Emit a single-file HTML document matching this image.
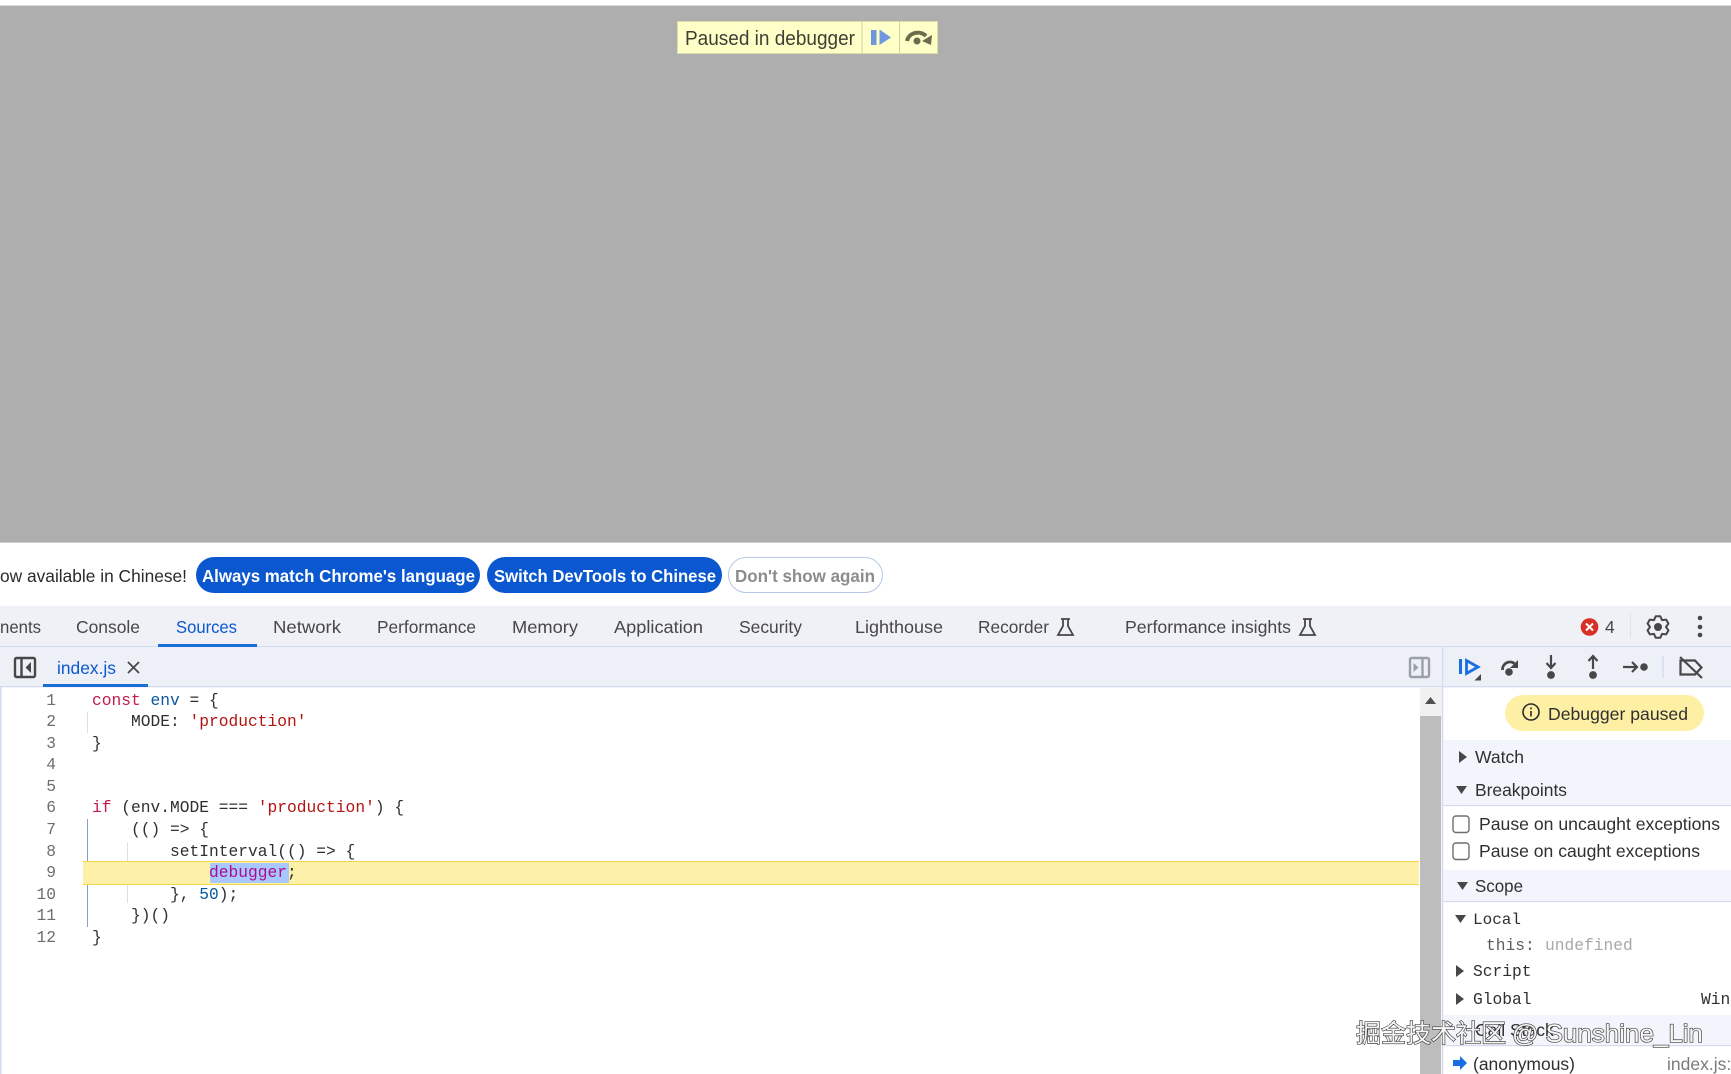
<!DOCTYPE html>
<html>
<head>
<meta charset="utf-8">
<title>Paused in debugger</title>
<style>
html,body{margin:0;padding:0;background:#fff;width:1731px;height:1074px;overflow:hidden}
svg{display:block;filter:blur(.3px)}
text{font-family:"Liberation Sans",sans-serif;white-space:pre}
.t{font-size:17.5px;fill:#474747}
.m{font-family:"Liberation Mono","DejaVu Sans Mono",monospace;font-size:16.25px;fill:#303030}
.n{font-family:"Liberation Mono","DejaVu Sans Mono",monospace;font-size:16.25px;fill:#6e6e6e;text-anchor:end}
.k{fill:#c41a4a}.s{fill:#b31412}.b{fill:#0b57a0}.p{fill:#aa0d91}
.wm{font-family:"Liberation Sans","Noto Sans CJK SC",sans-serif;font-size:25px;fill:#f6f6f6;stroke:#3c3c3c;stroke-width:1.3px;paint-order:stroke}
</style>
</head>
<body>
<svg width="1731" height="1074" viewBox="0 0 1731 1074" xmlns="http://www.w3.org/2000/svg">
<rect width="1731" height="1074" fill="#fff"/>
<!-- page overlay -->
<rect y="5" width="1731" height="1.5" fill="#d8d8d8"/>
<rect y="6" width="1731" height="536" fill="#aeaeae"/>
<!-- paused banner -->
<rect x="677.5" y="21.5" width="260" height="32" fill="#ffffc8" stroke="#dcdca8"/>
<line x1="862" y1="22" x2="862" y2="53" stroke="#cfcfa8"/>
<line x1="899.5" y1="22" x2="899.5" y2="53" stroke="#cfcfa8"/>
<text x="685" y="45" font-size="20" fill="#3f3f35" textLength="170" lengthAdjust="spacingAndGlyphs">Paused in debugger</text>
<rect x="871" y="30" width="5.500" height="15" fill="#6f97de"/>
<path d="M879.500 29.500 L891 37.500 L879.500 45Z" fill="#6f97de"/>
<path d="M907 41 A11 10 0 0 1 926 36" fill="none" stroke="#6b6b4e" stroke-width="4"/>
<path d="M932 35 L931 45 L922 41Z" fill="#6b6b4e"/>
<circle cx="917" cy="41" r="3.5" fill="#6b6b4e"/>

<!-- infobar -->
<rect y="542" width="1731" height="64" fill="#fff"/>
<rect y="542" width="1731" height="1" fill="#d0d0d8"/>
<text x="0" y="582" font-size="17.5" fill="#2a2a2a" textLength="187" lengthAdjust="spacingAndGlyphs">ow available in Chinese!</text>
<rect x="196" y="557" width="284" height="36" rx="18" fill="#0b57d0"/>
<text x="202" y="582" font-size="17.5" font-weight="700" fill="#fff" textLength="273" lengthAdjust="spacingAndGlyphs">Always match Chrome's language</text>
<rect x="487" y="557" width="235" height="36" rx="18" fill="#0b57d0"/>
<text x="494" y="582" font-size="17.5" font-weight="700" fill="#fff" textLength="222" lengthAdjust="spacingAndGlyphs">Switch DevTools to Chinese</text>
<rect x="728.5" y="557.5" width="154" height="35" rx="17.5" fill="#fff" stroke="#b5c7e6"/>
<text x="735" y="582" font-size="17.5" font-weight="700" fill="#8c8c8c" textLength="140" lengthAdjust="spacingAndGlyphs">Don't show again</text>

<!-- main tab bar -->
<rect y="606" width="1731" height="41" fill="#eff1f7"/>
<rect y="646" width="1731" height="1.3" fill="#d3dcf0"/>
<text class="t" x="0" y="633" textLength="41" lengthAdjust="spacingAndGlyphs">nents</text>
<text class="t" x="76" y="633" textLength="64" lengthAdjust="spacingAndGlyphs">Console</text>
<text class="t" x="176" y="633" style="fill:#0b57d0" textLength="61" lengthAdjust="spacingAndGlyphs">Sources</text>
<rect x="158" y="644" width="99" height="3" fill="#1a6fd6"/>
<text class="t" x="273" y="633" textLength="68" lengthAdjust="spacingAndGlyphs">Network</text>
<text class="t" x="377" y="633" textLength="99" lengthAdjust="spacingAndGlyphs">Performance</text>
<text class="t" x="512" y="633" textLength="66" lengthAdjust="spacingAndGlyphs">Memory</text>
<text class="t" x="614" y="633" textLength="89" lengthAdjust="spacingAndGlyphs">Application</text>
<text class="t" x="739" y="633" textLength="63" lengthAdjust="spacingAndGlyphs">Security</text>
<text class="t" x="855" y="633" textLength="88" lengthAdjust="spacingAndGlyphs">Lighthouse</text>
<text class="t" x="978" y="633" textLength="71" lengthAdjust="spacingAndGlyphs">Recorder</text>
<path d="M1061 619 H1070 M1063 619 V626 L1058 635 H1073 L1068 626 V619" fill="none" stroke="#474747" stroke-width="1.8"/>
<text class="t" x="1125" y="633" textLength="166" lengthAdjust="spacingAndGlyphs">Performance insights</text>
<path d="M1303 619 H1312 M1305 619 V626 L1300 635 H1315 L1310 626 V619" fill="none" stroke="#474747" stroke-width="1.8"/>
<circle cx="1589.5" cy="627" r="8.8" fill="#d93025"/>
<path d="M1586 623.5 L1593 630.5 M1593 623.5 L1586 630.5" stroke="#fff" stroke-width="2"/>
<text class="t" x="1605" y="633">4</text>
<line x1="1630.5" y1="614" x2="1630.5" y2="638" stroke="#dfe3ee"/>
<circle cx="1658" cy="627" r="4" fill="#474747"/>
<path transform="translate(1658 627)" d="M2.290 -10.760 L-2.290 -10.760 L-4 -6.930 L-8.170 -7.360 L-10.460 -3.400 L-8 0 L-10.460 3.400 L-8.170 7.360 L-4 6.930 L-2.290 10.760 L2.290 10.760 L4 6.930 L8.170 7.360 L10.460 3.400 L8 0 L10.460 -3.400 L8.170 -7.360 L4 -6.930Z" fill="none" stroke="#474747" stroke-width="2" stroke-linejoin="round"/>
<circle cx="1700" cy="618" r="2.300" fill="#474747"/><circle cx="1700" cy="627" r="2.300" fill="#474747"/><circle cx="1700" cy="635" r="2.300" fill="#474747"/>

<!-- sources toolbar -->
<rect y="647" width="1731" height="40" fill="#eef0f8"/>
<rect y="686" width="1731" height="1.3" fill="#d3dcf0"/>
<rect x="15" y="658" width="20" height="19" rx="1.500" fill="none" stroke="#474747" stroke-width="2.400"/>
<line x1="21.500" y1="658" x2="21.500" y2="677" stroke="#474747" stroke-width="2.400"/>
<path d="M31 662 V673 L25.500 667.500Z" fill="#474747"/>
<text x="57" y="674" font-size="17.500" fill="#0b57d0" textLength="59" lengthAdjust="spacingAndGlyphs">index.js</text>
<path d="M128 662 L139 673 M139 662 L128 673" stroke="#474747" stroke-width="1.8"/>
<rect x="43" y="684" width="105" height="3" fill="#1a6fd6"/>
<rect x="1410" y="658" width="19" height="19" rx="1.500" fill="none" stroke="#9aa0a6" stroke-width="2.400"/>
<line x1="1422.500" y1="658" x2="1422.500" y2="677" stroke="#9aa0a6" stroke-width="2.400"/>
<path d="M1413.500 663 V672 L1418.500 667.500Z" fill="#9aa0a6"/>

<!-- code area -->
<rect x="0" y="687" width="1.500" height="387" fill="#d3dcf0"/>
<rect x="1420" y="687" width="22" height="387" fill="#f1f1f1"/>
<rect x="1420" y="716" width="21" height="358" fill="#bdbdbd"/>
<path d="M1430.500 697 L1436 704 H1425Z" fill="#505050"/>
<rect x="1442" y="647" width="1.300" height="427" fill="#d3dcf0"/>

<line x1="87.500" y1="712" x2="87.500" y2="733" stroke="#dcdfe6"/>
<line x1="87.500" y1="819" x2="87.500" y2="927" stroke="#8aa0c4"/>
<line x1="127.500" y1="842" x2="127.500" y2="903" stroke="#dcdfe6"/>
<rect x="83" y="861.500" width="1336" height="23" fill="#fdf1a9"/>
<line x1="83" y1="861.500" x2="1419" y2="861.500" stroke="#f3d648"/>
<line x1="83" y1="884.500" x2="1419" y2="884.500" stroke="#f3d648"/>
<rect x="210" y="863" width="79" height="20" fill="#a8c7fa"/>

<text class="n" x="56" y="705">1</text>
<text class="n" x="56" y="726">2</text>
<text class="n" x="56" y="748">3</text>
<text class="n" x="56" y="769">4</text>
<text class="n" x="56" y="791">5</text>
<text class="n" x="56" y="812">6</text>
<text class="n" x="56" y="834">7</text>
<text class="n" x="56" y="856">8</text>
<text class="n" x="56" y="877">9</text>
<text class="n" x="56" y="899">10</text>
<text class="n" x="56" y="920">11</text>
<text class="n" x="56" y="942">12</text>

<text class="m" x="92" y="705"><tspan class="k">const</tspan> <tspan class="b">env</tspan> = {</text>
<text class="m" x="92" y="726">    MODE: <tspan class="s">'production'</tspan></text>
<text class="m" x="92" y="748">}</text>
<text class="m" x="92" y="812"><tspan class="k">if</tspan> (env.MODE === <tspan class="s">'production'</tspan>) {</text>
<text class="m" x="92" y="834">    (() =&gt; {</text>
<text class="m" x="92" y="856">        setInterval(() =&gt; {</text>
<text class="m" x="92" y="877">            <tspan class="p">debugger</tspan>;</text>
<text class="m" x="92" y="899">        }, <tspan class="b">50</tspan>);</text>
<text class="m" x="92" y="920">    })()</text>
<text class="m" x="92" y="942">}</text>

<!-- debugger toolbar icons -->
<rect x="1459" y="659" width="3" height="15" fill="#1a6fe0"/>
<path d="M1466.500 660.500 L1478 667 L1466.500 673.500Z" fill="none" stroke="#1a6fe0" stroke-width="2.800"/>
<path d="M1481 674 V680.500 H1474.500Z" fill="#474747"/>
<path d="M1502.500 670 A7.500 7.500 0 0 1 1514.500 663.500" fill="none" stroke="#474747" stroke-width="2.800"/>
<path d="M1518 660 V668 H1510Z" fill="#474747"/>
<circle cx="1509" cy="672" r="3.800" fill="#474747"/>
<path d="M1551 655 V668 M1546.500 663 L1551 668 L1555.500 663" fill="none" stroke="#474747" stroke-width="2.200"/>
<circle cx="1551" cy="675" r="3.900" fill="#474747"/>
<path d="M1593 669 V656 M1588.500 661 L1593 656 L1597.500 661" fill="none" stroke="#474747" stroke-width="2.200"/>
<circle cx="1593" cy="675" r="3.900" fill="#474747"/>
<path d="M1623 667 H1637 M1632 662 L1637 667 L1632 672" fill="none" stroke="#474747" stroke-width="2.200"/>
<circle cx="1644" cy="667" r="3.800" fill="#474747"/>
<line x1="1663" y1="656" x2="1663" y2="678" stroke="#cfdcf2" stroke-width="1.300"/>
<path d="M1680.500 660.500 H1695 L1701.500 667.500 L1695 674.500 H1680.500Z" fill="none" stroke="#474747" stroke-width="2.200"/>
<path d="M1680 657 L1702 678" stroke="#474747" stroke-width="2.200"/>

<!-- debugger sidebar -->
<rect x="1505" y="695" width="199" height="36" rx="18" fill="#fdf0a5"/>
<circle cx="1531" cy="712" r="8" fill="none" stroke="#2a2a2a" stroke-width="1.600"/>
<rect x="1530.200" y="711" width="1.600" height="5.500" fill="#2a2a2a"/>
<rect x="1530.200" y="707.500" width="1.600" height="1.800" fill="#2a2a2a"/>
<text x="1548" y="720" font-size="17.500" fill="#303030" textLength="140" lengthAdjust="spacingAndGlyphs">Debugger paused</text>

<rect x="1443.300" y="740" width="288" height="65" fill="#f2f5fb"/>
<rect x="1443.300" y="805" width="288" height="1.200" fill="#d3dcf0"/>
<path d="M1459 751 L1467 757 L1459 763Z" fill="#474747"/>
<text x="1475" y="763" font-size="17.500" fill="#303030" textLength="49" lengthAdjust="spacingAndGlyphs">Watch</text>
<path d="M1456 786 H1467 L1461.500 794Z" fill="#474747"/>
<text x="1475" y="796" font-size="17.500" fill="#303030" textLength="92" lengthAdjust="spacingAndGlyphs">Breakpoints</text>

<rect x="1453" y="816" width="16" height="16.500" rx="3" fill="#fff" stroke="#6e6e6e" stroke-width="1.400"/>
<text x="1479" y="830" font-size="17.500" fill="#303030" textLength="241" lengthAdjust="spacingAndGlyphs">Pause on uncaught exceptions</text>
<rect x="1453" y="843" width="16" height="16.500" rx="3" fill="#fff" stroke="#6e6e6e" stroke-width="1.400"/>
<text x="1479" y="857" font-size="17.500" fill="#303030" textLength="221" lengthAdjust="spacingAndGlyphs">Pause on caught exceptions</text>

<rect x="1443.300" y="870" width="288" height="31" fill="#f2f5fb"/>
<rect x="1443.300" y="901" width="288" height="1.200" fill="#d3dcf0"/>
<path d="M1457 882 H1468 L1462.500 890Z" fill="#474747"/>
<text x="1475" y="892" font-size="17.500" fill="#303030" textLength="48" lengthAdjust="spacingAndGlyphs">Scope</text>

<path d="M1455 915 H1466 L1460.500 923Z" fill="#474747"/>
<text class="m" x="1473" y="924" style="font-size:16px">Local</text>
<text class="m" x="1486" y="950" style="fill:#5f5f5f">this:</text>
<text class="m" x="1545" y="950" style="fill:#a8a8a8">undefined</text>
<path d="M1456 965 L1464 971 L1456 977Z" fill="#474747"/>
<text class="m" x="1473" y="976">Script</text>
<path d="M1456 993 L1464 999 L1456 1005Z" fill="#474747"/>
<text class="m" x="1473" y="1004">Global</text>
<text class="m" x="1701" y="1004">Win</text>

<rect x="1443.300" y="1015" width="288" height="30" fill="#f2f5fb"/>
<rect x="1443.300" y="1045" width="288" height="1.200" fill="#d3dcf0"/>
<text x="1475" y="1036" font-size="17.500" fill="#303030">Call Stack</text>
<path d="M1453 1060 H1460 V1056 L1467 1063 L1460 1070 V1066 H1453Z" fill="#1a6fe0"/>
<text x="1473" y="1070" font-size="17.500" fill="#303030" textLength="102" lengthAdjust="spacingAndGlyphs">(anonymous)</text>
<text x="1667" y="1070" font-size="17.500" fill="#7a7a7a">index.js:9</text>

<!-- watermark -->
<text class="wm" x="1356" y="1042">掘金技术社区</text>
<text class="wm" x="1512" y="1042" textLength="191" lengthAdjust="spacingAndGlyphs">@ Sunshine_Lin</text>
</svg>
</body>
</html>
